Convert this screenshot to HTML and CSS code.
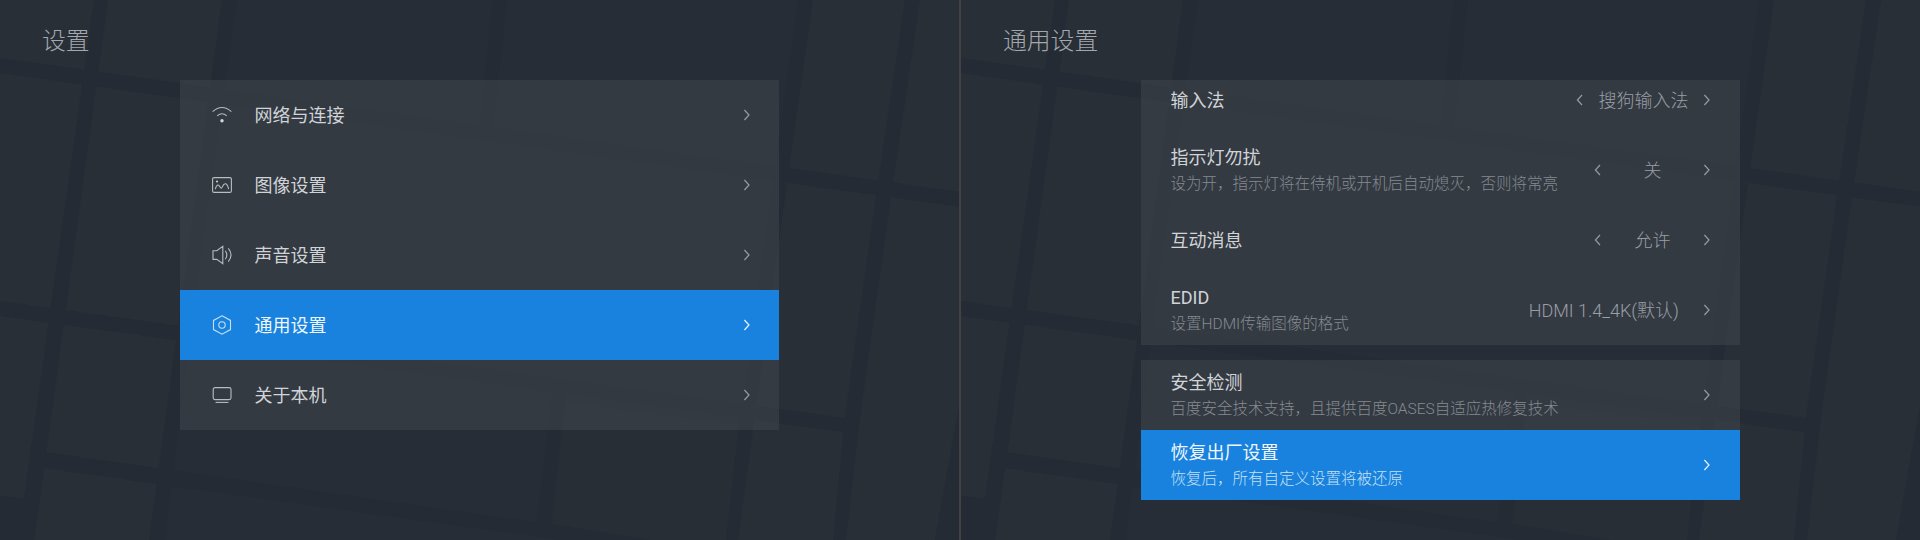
FILE: index.html
```html
<!DOCTYPE html>
<html lang="zh-CN">
<head>
<meta charset="utf-8">
<title>设置</title>
<link rel="stylesheet" href="styles.css">
</head>
<body>
<svg class="defs" width="0" height="0">
  <symbol id="next" viewBox="0 0 8 12"><path d="M1.4 1 6 6 1.4 11"/></symbol>
  <symbol id="prev" viewBox="0 0 8 12"><path d="M6 1 1.4 6 6 11"/></symbol>
  <symbol id="wall" viewBox="0 0 960 540">
    <rect width="960" height="540" fill="#282f37"/>
    <path d="M230 0H805L766 282 732 540H157L190 282Z" fill="#262d36"/>
    <g fill="#242b35">
      <path d="M0 58 960 192V207L0 73Z"/>
      <path d="M0 301 852 419 850 433 0 316Z"/>
      <path d="M45 452 560 526 660 540H560L43 468Z"/>
      <path d="M94 0H108L40 498 34 540H0V496L24 498Z"/>
      <path d="M222 0H237L197 282 165 540H149L184 282Z"/>
      <path d="M493 0H507L493 128H479Z"/>
      <path d="M553 390H566L550 528H536Z"/>
      <path d="M798 0H813L773 282 738 540H724L759 282Z"/>
      <path d="M905 0H920L891 196 860 417 846 540H833L845 417 876 196Z"/>
      <path d="M960 400V540H935Z"/>
    </g>
    <path d="M566 402 739 425 726 540H650L552 524Z" fill="#282e36"/>
  </symbol>
</svg>
<main class="board">
  <section class="screen">
    <svg class="wall"><use href="#wall"/></svg>
    <h1 class="title">设置</h1>
    <div class="list">
      <div class="group">
        <div class="row">
          <svg class="icon" viewBox="0 0 22 22"><path d="M1.6 7.6Q11-.7 20.4 7.6M6.2 11.8q4.8-4 9.6 0"/><circle class="dot" cx="11" cy="16.7" r="1.7"/></svg>
          <span class="label">网络与连接</span><svg class="chev"><use href="#next"/></svg>
        </div>
        <div class="row">
          <svg class="icon" viewBox="0 0 22 22"><rect x="1.6" y="3.6" width="18.8" height="14.8" rx="1.5"/><path d="M4.3 15.2C5.5 10.5 7.5 9.7 9 13.1q1.2 2.3 2.3-.2c2-4.5 4.9-4.5 6.3 2.3"/><circle class="dot" cx="6" cy="7.6" r="1"/></svg>
          <span class="label">图像设置</span><svg class="chev"><use href="#next"/></svg>
        </div>
        <div class="row">
          <svg class="icon" viewBox="0 0 22 22"><path d="M2 6.8H5.8L11.8 2.4V19.6L5.8 15.4H2ZM14.4 6.8q2.8 4.2 0 8.4M17.3 4.4q5.5 6.6 0 13.2"/></svg>
          <span class="label">声音设置</span><svg class="chev"><use href="#next"/></svg>
        </div>
        <div class="row active">
          <svg class="icon" viewBox="0 0 22 22"><path d="M11 1.8 19.5 6.4V15.6L11 20.2 2.5 15.6V6.4Z"/><circle cx="11" cy="11" r="3.2"/></svg>
          <span class="label">通用设置</span><svg class="chev"><use href="#next"/></svg>
        </div>
        <div class="row">
          <svg class="icon" viewBox="0 0 22 22"><rect x="2.2" y="3.6" width="17.8" height="12" rx="1.8"/><path d="M4.6 18.4H17.4"/></svg>
          <span class="label">关于本机</span><svg class="chev"><use href="#next"/></svg>
        </div>
      </div>
    </div>
  </section>
  <section class="screen detail">
    <svg class="wall"><use href="#wall"/></svg>
    <h1 class="title">通用设置</h1>
    <div class="list">
      <div class="group scrolled">
        <div class="row">
          <div class="text"><span class="label">输入法</span></div>
          <svg class="chev"><use href="#prev"/></svg><span class="value">搜狗输入法</span><svg class="chev"><use href="#next"/></svg>
        </div>
        <div class="row">
          <div class="text"><span class="label">指示灯勿扰</span><span class="desc">设为开，指示灯将在待机或开机后自动熄灭，否则将常亮</span></div>
          <svg class="chev"><use href="#prev"/></svg><span class="value">关</span><svg class="chev"><use href="#next"/></svg>
        </div>
        <div class="row">
          <div class="text"><span class="label">互动消息</span></div>
          <svg class="chev"><use href="#prev"/></svg><span class="value">允许</span><svg class="chev"><use href="#next"/></svg>
        </div>
        <div class="row">
          <div class="text"><span class="label">EDID</span><span class="desc">设置HDMI传输图像的格式</span></div>
          <span class="value plain">HDMI 1.4_4K(默认)</span><svg class="chev"><use href="#next"/></svg>
        </div>
      </div>
      <div class="group">
        <div class="row">
          <div class="text"><span class="label">安全检测</span><span class="desc">百度安全技术支持，且提供百度OASES自适应热修复技术</span></div>
          <svg class="chev"><use href="#next"/></svg>
        </div>
        <div class="row active">
          <div class="text"><span class="label">恢复出厂设置</span><span class="desc">恢复后，所有自定义设置将被还原</span></div>
          <svg class="chev"><use href="#next"/></svg>
        </div>
      </div>
    </div>
  </section>
</main>
</body>
</html>
```
FILE: styles.css
```css
* { box-sizing: border-box; }
body { margin: 0; background: #282f37; font-family: Roboto, "Noto Sans CJK SC", sans-serif; }
.defs { position: absolute; }
.board { display: flex; width: 1920px; height: 540px; overflow: hidden; }
.screen { position: relative; width: 959px; height: 540px; overflow: hidden; padding: 23px 180px 0; }
.detail { width: 961px; border-left: 2px solid #434143; }
.wall { position: absolute; left: 0; top: 0; width: 960px; height: 540px; }
.title { position: relative; margin: 0 0 21px -138px; height: 36px; line-height: 36px; font-size: 23.8px; font-weight: 300; color: #a4a8ad; }
.list { position: relative; display: flex; flex-direction: column; gap: 15px; width: 599px; }
.group { overflow: hidden; background: rgba(66, 71, 77, .5); }
.scrolled { height: 265px; }
.scrolled .row:first-child { margin-top: -15px; }
.row { display: flex; align-items: center; height: 70px; padding: 0 28px 0 31px; }
.icon { width: 22px; height: 22px; margin-right: 21.5px; fill: none; stroke: #b9bdc1; stroke-width: 1.1; }
.dot { fill: #d5d8da; stroke: none; }
.label { flex: 1; padding-top: 1px; font-size: 18px; line-height: 26px; color: #d0d3d7; }
.chev { width: 8px; height: 12px; fill: none; stroke: #979ba0; stroke-width: 1.2; }
.text { flex: 1; display: flex; flex-direction: column; }
.text .label { flex: none; }
.desc { font-size: 15.5px; line-height: 25px; padding-top: 1px; margin-bottom: -1px; font-weight: 300; color: #858a91; white-space: nowrap; }
.value { min-width: 101px; padding: 1px 14.4px 0; text-align: center; font-size: 18px; line-height: 26px; font-weight: 300; color: #9a9ea5; }
.plain { padding-right: 24px; }
.active { background: #1882de; }
.active .label { color: #f0f6fc; }
.active .desc { color: #c6e0f6; }
.active .chev { stroke: #e8f3fc; }
.active .icon { stroke: #c4e0f6; }
.detail .row { padding-left: 29.5px; padding-right: 29px; }
```
